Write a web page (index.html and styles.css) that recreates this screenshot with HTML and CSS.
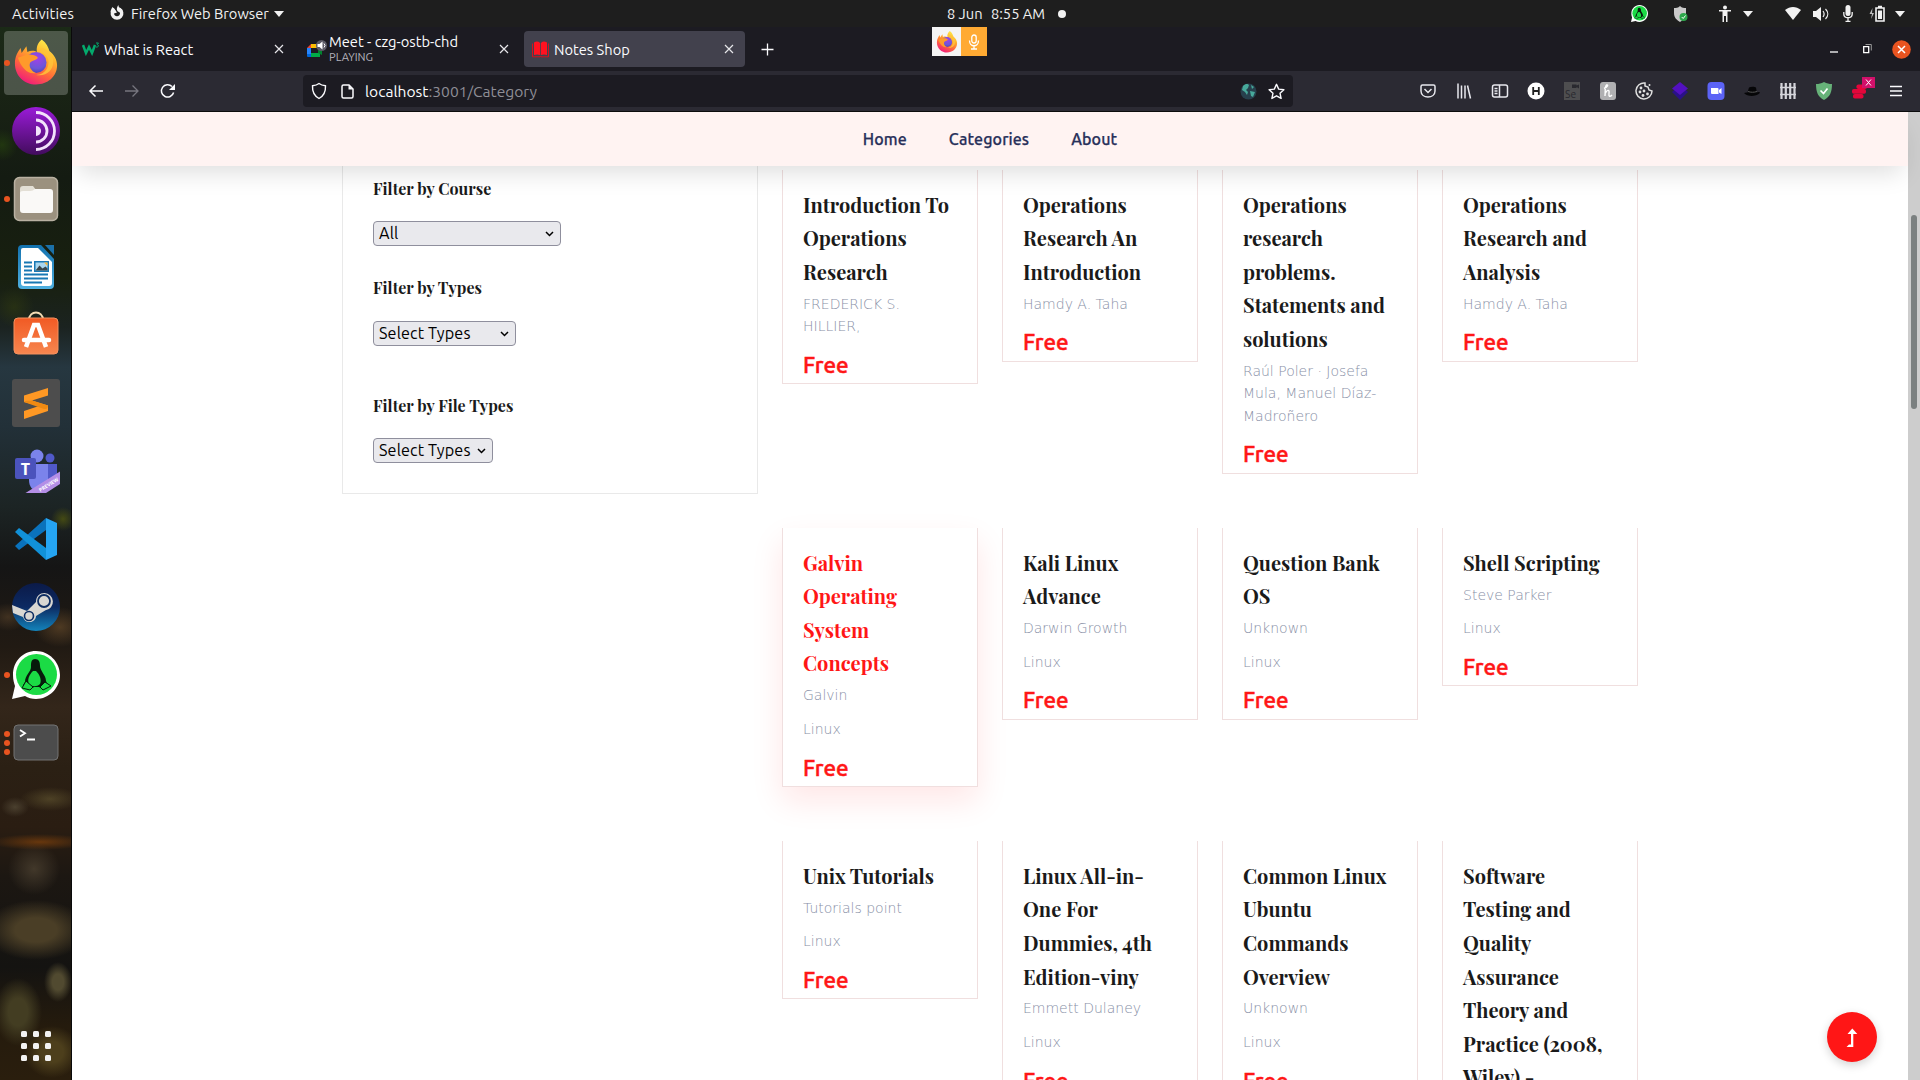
FILE: index.html
```html
<!DOCTYPE html>
<html lang="en">
<head>
<meta charset="utf-8">
<title>Notes Shop</title>
<link rel="stylesheet" href="styles.css">
</head>
<body>
<svg class="defs" width="0" height="0">
  <defs>
    <linearGradient id="ffBody" x1="0.8" y1="0" x2="0.3" y2="1"><stop offset="0" stop-color="#fff44f"/><stop offset=".35" stop-color="#ffb22c"/><stop offset=".65" stop-color="#ff6a3a"/><stop offset="1" stop-color="#f0197d"/></linearGradient>
    <radialGradient id="ffGlobe" cx=".55" cy=".3" r=".8"><stop offset="0" stop-color="#a23fe8"/><stop offset=".6" stop-color="#6b57d8"/><stop offset="1" stop-color="#4a3aa8"/></radialGradient>
    <linearGradient id="torG" x1="0" y1="0" x2="0" y2="1"><stop offset="0" stop-color="#9a1bd8"/><stop offset="1" stop-color="#420c5d"/></linearGradient>
    <linearGradient id="writerG" x1="0" y1="0" x2="0" y2="1"><stop offset="0" stop-color="#1271ae"/><stop offset="1" stop-color="#4fb0e0"/></linearGradient>
    <linearGradient id="softG" x1="0" y1="0" x2="0" y2="1"><stop offset="0" stop-color="#f15a24"/><stop offset="1" stop-color="#f7864f"/></linearGradient>
    <linearGradient id="steamG" x1="0" y1="0" x2="0" y2="1"><stop offset="0" stop-color="#0b1a48"/><stop offset=".5" stop-color="#0c2a62"/><stop offset="1" stop-color="#1484bb"/></linearGradient>
    <symbol id="firefox" viewBox="0 0 48 48">
      <path d="M30 1c5 4 7 8 8 12 5 4 8 9 8 15 0 12-10 20-22 20S2 39 2 26c0-7 3-12 6-16l1 5 5-7 1 6c4-2 8-1 10 0C24 9 26 4 30 1z" fill="url(#ffBody)"/>
      <circle cx="24" cy="25" r="11" fill="url(#ffGlobe)"/>
      <path d="M5 20c5-1 9-4 14-3 3 0 5 1 7 3-2 3-7 3-8 5-2 4 1 9 6 11-8 2-15-5-19-16z" fill="#ff9a2b"/>
      <path d="M28 14c8 2 11 9 8 16-2 5-7 8-12 8 10 2 18-4 18-14 0-7-5-12-12-14z" fill="#ffc33a" opacity=".85"/>
    </symbol>
    <symbol id="penguin" viewBox="0 0 48 48">
      <path d="M24 0C11 0 1 10 1 24c0 5 1 8 2 11L0 48l13-3c3 2 7 3 11 3 13 0 24-11 24-24S37 0 24 0z" fill="#fff"/>
      <circle cx="24.500" cy="23.500" r="20.500" fill="#1bdb45"/>
      <path d="M23 8c-4 0-4 4-4 8 0 5-6 8-6 15l-2 3c3 5 8 4 11 2h5c3 2 7 3 9-1l-2-5c0-6-6-10-6-15 0-4-1-7-5-7z" fill="#071b0b"/>
      <path d="M21 20c-4 4-6 9-4 13 3 3 8 3 11 0 2-5-1-10-4-13z" fill="#1bdb45"/>
      <path d="M14 30l-4 7 8 2 3-3zM33 31l6 4-8 4-3-3z" fill="#1bdb45" stroke="#071b0b"/>
    </symbol>
    <symbol id="close" viewBox="0 0 12 12"><path d="M2 2l8 8M10 2l-8 8" fill="none" stroke="currentColor" stroke-width="1.200"/></symbol>
    <symbol id="caret" viewBox="0 0 10 6"><path d="M0 0h10L5 6z" fill="#f2f2f2"/></symbol>
  </defs>
</svg>

<header class="topbar">
  <span class="tb-activities">Activities</span>
  <svg class="tb-app-icon" viewBox="0 0 16 18"><path d="M5.500 4.500a5 5 0 1 0 5 0" fill="none" stroke="#f2f2f2" stroke-width="3.600"/><path d="M9.500 0c0 3 2.500 3 4.500 6l-3 2-2-1c-2-2-1-5 .5-7zM1 7l2-5 3 3 2 3-3 1z" fill="#f2f2f2"/></svg>
  <span class="tb-app">Firefox Web Browser</span>
  <svg class="tb-caret" width="10" height="6"><use href="#caret"/></svg>
  <span class="tb-date">8 Jun</span>
  <span class="tb-time">8:55 AM</span>
  <i class="tb-dot"></i>
  <div class="tray">
    <svg class="t1" width="17" height="17"><use href="#penguin"/></svg>
    <svg class="t2" width="16" height="18" viewBox="0 0 16 18"><path d="M8 1c2 2 4 2 6 2v5c0 5-3 7-6 9-3-2-6-4-6-9V3c2 0 4 0 6-2z" fill="#c9c9c9"/><circle cx="11.500" cy="12" r="4" fill="#2da84b"/><path d="M9.700 12l1.500 1.500 2.300-3" fill="none" stroke="#fff"/></svg>
    <svg class="t3" width="12" height="17" viewBox="0 0 12 17" fill="#f2f2f2"><circle cx="6" cy="2.500" r="2"/><path d="M0 5h12v1.500H8.500V17H7v-6H5v6H3.500V6.500H0z"/></svg>
    <svg class="t4" width="10" height="6"><use href="#caret"/></svg>
    <svg class="t5" width="16" height="13" viewBox="0 0 16 13"><path d="M0 3c5-4 11-4 16 0L8 13z" fill="#f2f2f2"/></svg>
    <svg class="t6" width="16" height="14" viewBox="0 0 16 14"><path d="M0 4h3l5-4v14l-5-4H0z" fill="#f2f2f2"/><path d="M10 4c1.500 2 1.500 4 0 6M12.500 2c3 3 3 7 0 10" fill="none" stroke="#f2f2f2" stroke-width="1.200"/></svg>
    <svg class="t7" width="10" height="17" viewBox="0 0 10 17"><rect x="2.500" y="0" width="5" height="11" rx="2.500" fill="#f2f2f2"/><path d="M.8 7v2c0 5 8.400 5 8.400 0V7M5 13v3M2.500 16.300h5" fill="none" stroke="#f2f2f2" stroke-width="1.300"/></svg>
    <svg class="t8" width="16" height="17" viewBox="0 0 16 17"><path d="M3.500 3L.5 9H3l-1 5 3-6H3z" fill="#bbb"/><path d="M7 3h8v13H7zM9 1.500h4" fill="none" stroke="#f2f2f2" stroke-width="1.600"/><path d="M9 5.500h4V14H9z" fill="#f2f2f2"/></svg>
    <svg class="t9" width="10" height="6"><use href="#caret"/></svg>
  </div>
</header>

<div class="desktop">
  <nav class="dock">
    <div class="app focused"><i class="run"></i><svg width="38" height="48"><use href="#firefox"/></svg></div>
    <div class="app"><svg width="48" height="48" viewBox="0 0 48 48"><circle cx="24" cy="24" r="24" fill="url(#torG)"/><g fill="none" stroke="#f3e3fb" stroke-width="2.800"><path d="M24 13a11 11 0 0 1 0 22"/><path d="M24 5.500a18.500 18.500 0 0 1 0 37"/></g><path d="M24 19a5 5 0 0 1 0 10z" fill="#f3e3fb"/></svg></div>
    <div class="app"><i class="run"></i><svg width="46" height="46" viewBox="0 0 46 46"><rect x="1.500" y="1.500" width="43" height="43" rx="5" fill="#9b917f" stroke="#b9b1a2" stroke-width="1.500"/><path d="M7 13q0-3 3-3h10l3 4h14v8H7z" fill="#e3dfd5"/><path d="M7 17q0-2 3-2h7q3 0 5-2h15q3 0 3 3v18q0 3-3 3H10q-3 0-3-3z" fill="#faf9f7"/></svg></div>
    <div class="app"><svg width="38" height="46" viewBox="0 0 38 46"><path d="M5 1h19l13 14v26q0 4-4 4H5q-4 0-4-4V5q0-4 4-4z" fill="url(#writerG)"/><path d="M6 4h15l14 14v21q0 3-3 3H7q-3 0-3-3V6q0-2 2-2z" fill="#fff"/><path d="M28 1h9v10z" fill="#1b70a8"/><path d="M7 18.500h8M7 22.500h8M7 26.500h8M7 30.500h24M7 34.500h24M7 38.500h18" stroke="#1878b4" stroke-width="2"/><path d="M17 17h15v11H17z" fill="#1878b4"/><path d="M18.500 18.500h12v8h-12z" fill="#a9d6ef"/><path d="M18.500 26.500l4-5 3 3 3-2 2 2v2z" fill="#3a474d"/><path d="M27 18.500h3.500V22z" fill="#f9b233"/></svg></div>
    <div class="app"><svg class="bag" width="46" height="44" viewBox="0 0 46 44"><path d="M16 9c0-10 14-10 14 0" fill="none" stroke="#f4dcb4" stroke-width="2"/><rect x="1" y="7" width="44" height="36" rx="4" fill="url(#softG)" stroke="#f4905f"/><path d="M13 36L21 14h4l8 22" fill="none" stroke="#fff" stroke-width="4.500"/><path d="M11 29h25" stroke="#fff" stroke-width="4.500" stroke-linecap="round"/></svg></div>
    <div class="app"><svg width="48" height="48" viewBox="0 0 48 48"><rect width="48" height="48" rx="3" fill="#4d4d4d"/><path d="M12 16.500L36 9v7.500L20 21.500l16 5V32L12 40v-8l15-5-15-4z" fill="#ff9824"/><path d="M20 21.500l16 5c0 3-2 4-4 3.500L12 23c1-2 4-1 8-1.500z" fill="#f08a12"/></svg></div>
    <div class="app"><svg width="48" height="46" viewBox="0 0 48 46"><circle cx="25" cy="8" r="6.500" fill="#7b83eb"/><circle cx="38" cy="10" r="4.500" fill="#5059c9"/><path d="M34 16h11v12c0 5-4 9-11 8z" fill="#5059c9"/><path d="M17 16h19v16c0 7-5 11-10 11s-9-4-9-11z" fill="#7b83eb"/><rect x="3" y="10" width="21" height="21" rx="2" fill="#4b53bc"/><text x="13.500" y="26.500" class="i-t">T</text><path d="M13.500 45L48 23.500V36L34 45z" fill="#b48ee6"/><text x="36.500" y="38.500" class="i-preview" transform="rotate(-32 36.500 36.500)">PREVIEW</text></svg></div>
    <div class="app"><svg width="44" height="44" viewBox="0 0 44 44"><path d="M32 1L1 29l4 4 27-20z" fill="#0a72bc"/><path d="M1 15l4-4 27 20v12L1 15z" fill="#1191d8"/><path d="M32 1l11 5v32l-11 5z" fill="#25a5f2"/></svg></div>
    <div class="app"><svg width="48" height="48" viewBox="0 0 48 48"><circle cx="24" cy="24" r="24" fill="url(#steamG)"/><path d="M0 22l15 6 9-9c0-6 4-9 8.500-9a8.700 8.700 0 0 1 1 17.300L24 33c0 4-4 6.500-7 6-3 0-5-2-6-5L1 30z" fill="#d9d7d2"/><circle cx="32" cy="18" r="6" fill="#d9d7d2" stroke="#0f2e63" stroke-width="1.800"/><circle cx="17" cy="33" r="4.500" fill="#d9d7d2" stroke="#0f2e63" stroke-width="1.600"/></svg></div>
    <div class="app"><i class="run"></i><svg width="48" height="48"><use href="#penguin"/></svg></div>
    <div class="app"><i class="run three"></i><svg width="46" height="38" viewBox="0 0 46 38"><rect x="1" y="1" width="44" height="35" rx="4" fill="#4c4c4c" stroke="#727272"/><path d="M7 6l5 3.300L7 12.500M14 15.500h8" fill="none" stroke="#fff" stroke-width="1.800"/></svg></div>
    <div class="apps-grid"><i></i><i></i><i></i><i></i><i></i><i></i><i></i><i></i><i></i></div>
  </nav>

  <div class="browser">
    <div class="tabs">
      <div class="tab tab1">
        <svg class="fav" width="18" height="14" viewBox="0 0 18 14"><path d="M1 3l3 8 3-6 3 6 3-8" fill="none" stroke="#04aa6d" stroke-width="2.500"/><path d="M14 1h2.500l-1.300 1.700c2 0 1.800 2.800-1.200 2.300" fill="none" stroke="#04aa6d"/></svg>
        <span class="tab-title">What is React</span>
        <svg class="x" width="12" height="12"><use href="#close"/></svg>
      </div>
      <div class="tab tab2">
        <svg class="fav" width="20" height="18" viewBox="0 0 20 18"><path d="M4 4h9v4H4z" fill="#fbbc04"/><path d="M0 8l4-4v4z" fill="#ea4335"/><path d="M0 8h4v6H0z" fill="#2684fc"/><path d="M0 14h4v3H1q-1 0-1-1z" fill="#0066da"/><path d="M4 13h9v4H4z" fill="#00ac47"/><path d="M11 8l4-2v9l-4-2z" fill="#00832d"/><circle cx="14.500" cy="5.500" r="5.500" fill="#5b5a66"/><path d="M10.500 4h2l3-2.500v8L12.500 7h-2z" fill="#fff"/><path d="M17 3.500q2 2 0 4" fill="none" stroke="#fff"/></svg>
        <div class="tab-stack"><span class="tab-title">Meet - czg-ostb-chd</span><span class="tab-sub">PLAYING</span></div>
        <svg class="x" width="12" height="12"><use href="#close"/></svg>
      </div>
      <div class="tab tab3">
        <svg class="fav" width="17" height="17" viewBox="0 0 17 17"><path d="M2 1.500q3.500-2 6.100.5v12q-3-1-6.100 0zM15 1.500q-3.500-2-6.100.5v12q3-1 6.100 0z" fill="#ff1220"/><path d="M.5 2.500v13.300h7.500l.5-.8.500.8h7.500V2.500" fill="none" stroke="#d8101c"/></svg>
        <span class="tab-title">Notes Shop</span>
        <svg class="x" width="12" height="12"><use href="#close"/></svg>
      </div>
      <svg class="newtab" width="13" height="13" viewBox="0 0 13 13"><path d="M6.500 .5v12M.5 6.500h12" stroke="#fbfbfe" stroke-width="1.300"/></svg>
      <div class="win">
        <svg width="8" height="12" viewBox="0 0 8 12"><path d="M0 9h8" stroke="#fff" stroke-width="1.300"/></svg>
        <svg width="9" height="10" viewBox="0 0 9 10"><path d="M.7 2.700h5v6h-5z" fill="none" stroke="#fff" stroke-width="1.300"/><path d="M2.500 .5h5.800v6" fill="none" stroke="#999"/></svg>
        <svg width="19" height="19" viewBox="0 0 19 19"><circle cx="9.500" cy="9.500" r="9.300" fill="#e95420"/><path d="M6 6l7 7M13 6l-7 7" stroke="#fff" stroke-width="1.500"/></svg>
      </div>
      <div class="sharing">
        <div class="s-fx"><svg width="22" height="23"><use href="#firefox"/></svg></div>
        <div class="s-mic"><svg width="12" height="16" viewBox="0 0 12 16" fill="none" stroke="#fff" stroke-width="1.300"><rect x="3.800" y="1" width="4.400" height="8" rx="2.200"/><path d="M1.500 6.500c0 7 9 7 9 0M6 12v2.500M3 15h6"/></svg></div>
      </div>
    </div>

    <div class="toolbar">
      <svg class="nb" width="16" height="16" viewBox="0 0 16 16" fill="none" stroke="#fbfbfe" stroke-width="1.500"><path d="M15 8H2M7.500 2.500L2 8l5.500 5.500"/></svg>
      <svg class="nb" width="16" height="16" viewBox="0 0 16 16" fill="none" stroke="#77767f" stroke-width="1.300"><path d="M1 8h13M8.500 2.500L14 8l-5.500 5.500"/></svg>
      <svg class="nb" width="16" height="16" viewBox="0 0 16 16"><path d="M13.600 9.500A6.200 6.200 0 1 1 12 3.500" fill="none" stroke="#fbfbfe" stroke-width="1.500"/><path d="M15 1v6H9z" fill="#fbfbfe"/></svg>
      <div class="url">
        <svg width="16" height="18" viewBox="0 0 16 18"><path d="M8 1.500c2 1.500 4 2 6.500 2.300.3 6-1.500 10-6.500 12.700C3 13.800 1.200 9.800 1.500 3.800 4 3.500 6 3 8 1.500z" fill="none" stroke="#fbfbfe" stroke-width="1.400"/></svg>
        <svg class="doc" width="13" height="15" viewBox="0 0 13 15"><path d="M2.500 1H8l4 4v7.500q0 1.500-1.500 1.500h-8Q1 14 1 12.500v-10Q1 1 2.500 1z" fill="none" stroke="#fbfbfe" stroke-width="1.500"/><path d="M7.500 1v4.500H12z" fill="#fbfbfe"/></svg>
        <span class="addr"><b>localhost</b>:3001/Category</span>
        <svg class="globe" width="17" height="17" viewBox="0 0 17 17"><circle cx="8.500" cy="8.500" r="8" fill="#27404d"/><path d="M3 3c3-3 5-2 6-1L8 5 6 7l2 2-1 3-2-3-3-2zM10 8l5 1-2 5-2-1zM11 2l3 2-2 2z" fill="#47a99b"/></svg>
        <svg class="star" width="17" height="17" viewBox="0 0 17 17"><path d="M8.500 1.300l2.200 4.800 5.200.6-3.900 3.500 1.100 5.200-4.600-2.600-4.600 2.600 1.100-5.200L1.100 6.700l5.200-.6z" fill="none" stroke="#fbfbfe" stroke-width="1.400" stroke-linejoin="round"/></svg>
      </div>
      <div class="exts">
        <svg viewBox="0 0 18 18" fill="none" stroke="#e8e8ee" stroke-width="1.500"><path d="M3.500 3h11q1.500 0 1.500 1.500V9c0 8-14 8-14 0V4.500Q2 3 3.500 3z"/><path d="M5.500 7L9 10.500 12.500 7"/></svg>
        <svg viewBox="0 0 18 18" fill="none" stroke="#e8e8ee" stroke-width="1.500"><path d="M3 1.500v15M6.500 3.500v13M10 3.500v13M12.500 3.500l3 13"/></svg>
        <svg viewBox="0 0 18 18" fill="none" stroke="#e8e8ee" stroke-width="1.500"><rect x="1.500" y="3" width="15" height="12" rx="2"/><path d="M8.500 3v12M3.500 6.500h3M3.500 9h3M3.500 11.500h3"/></svg>
        <svg viewBox="0 0 18 18"><circle cx="9" cy="9" r="8.500" fill="#fff"/><path d="M6.200 5v8M11.800 5v8M6 9h6" stroke="#222" stroke-width="1.800"/></svg>
        <svg viewBox="0 0 18 18"><path d="M1 0h16v18H1z" fill="#4e4e50"/><text x="2" y="16" class="i-se">Se</text><path d="M9 2.500h4.500v1L16 2.500v4L13.500 5v1H9z" fill="#29292f"/></svg>
        <svg viewBox="0 0 18 18"><rect x="1" y="0" width="16" height="18" rx="3" fill="#b0b0b2"/><path d="M5 6.500c4-2 4.500-4 2.500-3.500-2 2-1 7-1.500 11M6.500 11c2-4 4-3 3.500 0-.5 4 1 4 3 2" fill="none" stroke="#fff" stroke-width="1.400"/></svg>
        <svg viewBox="0 0 18 18"><path d="M10 1a8 8 0 1 0 7 8l-3-1-1-3-3-1z" fill="none" stroke="#e0e0e0" stroke-width="1.500"/><g fill="#e0e0e0"><circle cx="6" cy="6" r="1.400"/><circle cx="5" cy="10" r="1.400"/><circle cx="9" cy="9" r="1.400"/><circle cx="8" cy="13.500" r="1.400"/><circle cx="12.500" cy="12" r="1.400"/><circle cx="14.500" cy="3" r="1"/></g></svg>
        <svg viewBox="0 0 18 18"><path d="M9 3l8 7-8 8-8-8z" fill="#2a1188"/><path d="M9 0l8 6.500L9 13 1 6.500z" fill="#5310c0"/></svg>
        <svg viewBox="0 0 18 18"><rect x=".5" y="0" width="17" height="18" rx="4" fill="#5c63f6"/><path d="M4 6h6.500q1 0 1 1v5H5q-1 0-1-1zM12 8l2.500-2v6L12 10.500z" fill="#fff"/></svg>
        <svg viewBox="0 0 18 18"><path d="M4.500 10.500L6 5.500c2-1 5.500-1 7 0l.8 5c3-1 3.500 0 2.700.8-3 3-10.500 3.500-14 1-2-1-1-2 2-1.800z" fill="#060608"/><path d="M5 9.500c3 1 6 1 9 0" stroke="#555" fill="none"/></svg>
        <svg viewBox="0 0 18 18" stroke="#d4d4da"><path d="M2.500 1v16M6.800 1v16M11.200 1v16M15.500 1v16" stroke-width="2.200"/><path d="M1 5.500h16M1 12.500h16" stroke-width="1.500"/></svg>
        <svg viewBox="0 0 18 18"><path d="M9 0c3 1.500 5 2 8 2 0 8-2 13-8 16C3 15 1 10 1 2c3 0 5-.5 8-2z" fill="#67b279"/><path d="M5.500 8.500l3 3 4-5" fill="none" stroke="#fff" stroke-width="1.700"/></svg>
        <span class="red"><svg viewBox="0 0 18 18" fill="#e3063a"><rect x="5.500" y="2.500" width="10.500" height="4.500" rx="1.800"/><rect x="1" y="7" width="14" height="4.700" rx="1.800"/><rect x="2" y="12" width="10.500" height="4.500" rx="1.800"/></svg><svg class="redx" width="13" height="11" viewBox="0 0 13 11"><path d="M0 0h13v11H0z" fill="#d1106a"/><path d="M4 2.500l5 6M9 2.500l-5 6" stroke="#fff"/></svg></span>
        <svg viewBox="0 0 18 18" stroke="#fbfbfe" stroke-width="1.500"><path d="M3 4.500h12M3 9h12M3 13.500h12"/></svg>
      </div>
    </div>

    <div class="page">
      <nav class="sitenav"><a>Home</a><a>Categories</a><a>About</a></nav>
      <main class="shop">
        <aside class="filters">
          <h4>Filter by Course</h4>
          <div class="select s1"><span>All</span><svg width="9" height="6" viewBox="0 0 9 6"><path d="M1 1l3.500 3.500L8 1" fill="none" stroke="#000" stroke-width="1.500"/></svg></div>
          <h4>Filter by Types</h4>
          <div class="select s2"><span>Select Types</span><svg width="9" height="6" viewBox="0 0 9 6"><path d="M1 1l3.500 3.500L8 1" fill="none" stroke="#000" stroke-width="1.500"/></svg></div>
          <h4>Filter by File Types</h4>
          <div class="select s3"><span>Select Types</span><svg width="9" height="6" viewBox="0 0 9 6"><path d="M1 1l3.500 3.500L8 1" fill="none" stroke="#000" stroke-width="1.500"/></svg></div>
        </aside>
        <section class="books">
          <article class="card"><h3>Introduction To<br>Operations<br>Research</h3><p>FREDERICK S.<br>HILLIER,</p><strong>Free</strong></article>
          <article class="card"><h3>Operations<br>Research An<br>Introduction</h3><p>Hamdy A. Taha</p><strong>Free</strong></article>
          <article class="card"><h3>Operations<br>research<br>problems.<br>Statements and<br>solutions</h3><p>Raúl Poler · Josefa<br>Mula, Manuel Díaz-<br>Madroñero</p><strong>Free</strong></article>
          <article class="card"><h3>Operations<br>Research and<br>Analysis</h3><p>Hamdy A. Taha</p><strong>Free</strong></article>
          <article class="card hover"><h3>Galvin<br>Operating<br>System<br>Concepts</h3><p>Galvin</p><p>Linux</p><strong>Free</strong></article>
          <article class="card"><h3>Kali Linux<br>Advance</h3><p>Darwin Growth</p><p>Linux</p><strong>Free</strong></article>
          <article class="card"><h3>Question Bank<br>OS</h3><p>Unknown</p><p>Linux</p><strong>Free</strong></article>
          <article class="card"><h3>Shell Scripting</h3><p>Steve Parker</p><p>Linux</p><strong>Free</strong></article>
          <article class="card"><h3>Unix Tutorials</h3><p>Tutorials point</p><p>Linux</p><strong>Free</strong></article>
          <article class="card"><h3>Linux All-in-<br>One For<br>Dummies, 4th<br>Edition-viny</h3><p>Emmett Dulaney</p><p>Linux</p><strong>Free</strong></article>
          <article class="card"><h3>Common Linux<br>Ubuntu<br>Commands<br>Overview</h3><p>Unknown</p><p>Linux</p><strong>Free</strong></article>
          <article class="card"><h3>Software<br>Testing and<br>Quality<br>Assurance<br>Theory and<br>Practice (2008,<br>Wiley) -</h3></article>
        </section>
      </main>
      <div class="scrollbar"><i></i></div>
      <button class="totop"><svg width="14" height="21" viewBox="0 0 14 21"><path d="M8.300 6v13H1.500L4 16.500h2V6H2.500L7.300.5l5 5.500z" fill="#fff"/></svg></button>
    </div>
  </div>
</div>
</body>
</html>
```
FILE: styles.css
```css
* { box-sizing: border-box; }
html, body { margin: 0; height: 100%; overflow: hidden; }
body {
  display: flex; flex-direction: column; width: 1920px; height: 1080px;
  font-family: Ubuntu, "Noto Sans", "Open Sans", sans-serif; background: #fff;
}
svg { display: block; flex: none; }
.defs { position: absolute; }

/* system bar */
.topbar { display: flex; align-items: center; height: 27px; flex: none; background: #1e1e1e; color: #f2f2f2; font-size: 14.670px; line-height: 27px; white-space: nowrap; }
.tb-activities { width: 62px; margin-left: 12px; letter-spacing: .2px; }
.tb-app-icon { width: 16px; height: 17px; margin-left: 35px; }
.tb-app { width: 138px; margin-left: 6px; }
.tb-caret { margin-left: 5px; }
.tb-date { width: 34px; margin-left: 663px; }
.tb-time { width: 55px; margin-left: 10px; }
.tb-dot { width: 8px; height: 8px; margin-left: 12px; border-radius: 50%; background: #f2f2f2; }
.tray { display: flex; align-items: center; margin-left: 565px; }
.t2 { margin-left: 24px; }
.t3 { margin-left: 31px; }
.t4 { margin-left: 12px; }
.t5 { margin-left: 32px; }
.t6 { margin-left: 12px; }
.t7 { margin-left: 14px; }
.t8 { margin-left: 16px; }
.t9 { margin-left: 10px; }

.desktop { display: flex; flex: 1; min-height: 0; }

/* launcher */
.dock {
  display: flex; flex-direction: column; width: 72px; flex: none; padding-top: 4px;
  border-right: 1px solid #0a0a0a;
  background:
    radial-gradient(ellipse 30px 12px at 50px 772px, rgba(92,80,45,.7), transparent),
    radial-gradient(ellipse 14px 10px at 15px 780px, rgba(88,78,58,.7), transparent),
    radial-gradient(ellipse 50px 8px at 40px 815px, rgba(120,62,12,.8), transparent),
    radial-gradient(ellipse 26px 26px at 34px 842px, rgba(75,64,48,.8), transparent),
    radial-gradient(ellipse 52px 30px at 36px 903px, #4a3e26 40%, transparent),
    radial-gradient(ellipse 24px 34px at 18px 985px, #433d22 40%, transparent),
    radial-gradient(ellipse 14px 20px at 58px 955px, #514a30 40%, transparent),
    radial-gradient(ellipse 28px 26px at 52px 1025px, #4d3f1c 40%, transparent),
    radial-gradient(circle 12px at 63px 492px, rgba(78,84,16,.8), transparent),
    radial-gradient(ellipse 26px 20px at 60px 600px, rgba(90,66,38,.8), transparent),
    radial-gradient(ellipse 20px 14px at 8px 590px, rgba(80,60,38,.7), transparent),
    radial-gradient(circle 20px at 14px 280px, rgba(48,58,16,.6), transparent),
    radial-gradient(circle 16px at 2px 118px, rgba(40,70,14,.6), transparent),
    linear-gradient(#1b2a17 0, #182114 90px, #141b12 150px, #18200f 250px, #1b2320 300px, #263740 340px, #223038 400px, #1c2424 480px, #151515 540px, #211a13 620px, #33261a 680px, #2b2014 740px, #2a1d12 800px, #1c1712 850px, #141311 940px, #251b0d 1000px, #2a1e0d 1053px);
}
.app { position: relative; display: flex; align-items: center; justify-content: center; height: 64px; margin: 0 3px 4px 4px; flex: none; }
.focused { border-radius: 4px; background: rgba(255,255,255,.22); }
.focused svg { width: 46px; height: 47px; margin-bottom: 3px; }
.bag { margin-bottom: 5px; }
.run { position: absolute; left: 0; top: 29px; width: 6px; height: 6px; border-radius: 50%; background: #e95420; }
.three { box-shadow: 0 -9px #e95420, 0 9px #e95420; }
.i-t { font: bold 16px "Open Sans", sans-serif; fill: #fff; text-anchor: middle; }
.i-preview { font: bold 5px "Open Sans", sans-serif; fill: #fff; text-anchor: middle; }
.i-se { font: 10px "Open Sans", sans-serif; fill: #29292f; }
.apps-grid { display: grid; grid-template-columns: repeat(3, 6px); gap: 6px; margin: auto 0 19px 21px; }
.apps-grid i { height: 6px; border-radius: 1.5px; background: #f2f2f2; }

/* browser chrome */
.browser { display: flex; flex-direction: column; flex: 1; min-width: 0; }
.tabs { position: relative; display: flex; height: 44px; flex: none; background: #1c1b22; color: #fbfbfe; font-size: 14.670px; }
.tab { display: flex; align-items: center; height: 36px; margin-top: 4px; white-space: nowrap; }
.tab .x { margin-left: auto; color: #e6e6ea; }
.tab-title { padding-top: 1px; line-height: 18px; }
.tab1 { width: 220px; padding: 0 7px 0 10px; }
.tab1 .tab-title { margin-left: 4px; }
.tab2 { width: 232px; padding: 0 14px 0 15px; }
.tab2 .tab-title { padding: 0; line-height: 16px; }
.tab-stack { display: flex; flex-direction: column; margin-left: 2px; }
.tab-sub { font-size: 11.200px; line-height: 14px; color: #b5b4bd; }
.tab3 { width: 221px; padding: 0 10px 0 8px; border-radius: 4px; background: #42414d; }
.tab3 .tab-title { margin-left: 5px; }
.newtab { margin: 16px 0 0 16px; }
.win { display: flex; align-items: center; height: 44px; margin-left: auto; padding-right: 9px; }
.win svg + svg { margin-left: 25px; }
.win svg:last-child { margin-left: 20px; }
.sharing { position: absolute; left: 860px; top: 0; display: flex; height: 29px; }
.s-fx, .s-mic { display: flex; align-items: center; justify-content: center; }
.s-fx { width: 29px; background: #f4f4f4; }
.s-mic { width: 26px; background: #ffaa33; }

.toolbar { display: flex; align-items: center; height: 41px; flex: none; padding-left: 16px; border-bottom: 1px solid #0c0c0d; background: #2b2a33; }
.nb { margin-right: 20px; }
.url { display: flex; align-items: center; width: 990px; height: 32px; margin-left: 107px; padding: 0 8px; border-radius: 4px; background: #1c1b22; font-size: 15.600px; }
.doc { margin-left: 14px; }
.addr { margin-left: 11px; padding-top: 1px; color: #8f8e96; line-height: 31px; }
.addr b { font-weight: 400; color: #fbfbfe; }
.globe { margin-left: auto; }
.star { margin-left: 11px; }
.exts { display: flex; gap: 18px; margin: 0 15px 0 auto; }
.exts svg { width: 18px; height: 18px; }
.red { position: relative; width: 18px; }
.red .redx { position: absolute; left: 11px; top: -5px; width: 13px; height: 11px; }

/* site */
.page { position: relative; display: flex; flex-direction: column; flex: 1; min-height: 0; overflow: hidden; background: #fff; }
.sitenav {
  position: relative; z-index: 2; display: flex; justify-content: center; gap: 42px; height: 54px; flex: none;
  margin-right: 12px; background: #fff3f2; color: #28305a; letter-spacing: .1px;
  font-size: 16px; font-weight: 500; line-height: 54px; -webkit-text-stroke: .25px #28305a;
  box-shadow: 0 13px 24px -6px rgba(0,0,0,.13);
}
.shop { display: flex; align-items: flex-start; gap: 24px; flex: 1; min-height: 0; padding-left: 270px; }
.filters { width: 416px; height: 328px; padding: 10px 30px; border: 1px solid #e9e9e9; border-top: 0; }
.filters h4 { margin: 0; font: bold 16px/26px "Playfair Display", "Liberation Serif", serif; letter-spacing: .05px; color: #1a1a1a; }
.select { display: flex; align-items: center; justify-content: space-between; height: 25px; padding: 0 6px 0 5px; border: 1px solid #8f8f9d; border-radius: 4px; background: #e9e9ed; color: #000; font-size: 16.200px; letter-spacing: .12px; line-height: 23px; white-space: nowrap; }
.s1 { width: 188px; margin: 19px 0 29px; }
.s2 { width: 143px; margin: 20px 0 47px; }
.s3 { width: 120px; margin-top: 19px; }

.books { display: grid; grid-template-columns: repeat(4, 196px); column-gap: 24px; row-gap: 54px; align-items: start; padding-top: 4px; }
.card { padding: 17.700px 20px 0; border: 1px solid #f0dfdf; border-top: 0; background: #fff; white-space: nowrap; }
.card h3 { margin: 0 0 4.300px; font: bold 20px/33.600px "Playfair Display", "Liberation Serif", serif; color: #1a1a1a; }
.card p { margin: 0 0 11.200px; font: 200 14px/22.400px "DejaVu Sans", sans-serif; color: #888fa6; }
.card strong { display: block; height: 34.600px; font-size: 22.400px; font-weight: 500; line-height: 32.400px; color: #ff1616; -webkit-text-stroke: .5px #ff1616; }
.hover { box-shadow: 0 14px 30px rgba(255,22,22,.1); }
.hover h3 { color: #ff1616; }

.scrollbar { position: absolute; right: 0; top: 0; width: 12px; height: 100%; background: #cdcdcd; }
.scrollbar i { display: block; width: 6px; height: 194px; margin: 103px 0 0 3px; border-radius: 3px; background: #7b8080; }
.totop { position: absolute; right: 43px; bottom: 18px; display: flex; align-items: center; justify-content: center; width: 50px; height: 50px; padding: 3px 0 0; border: 0; border-radius: 50%; background: #ff1616; box-shadow: 0 3px 10px rgba(0,0,0,.18); }
```
